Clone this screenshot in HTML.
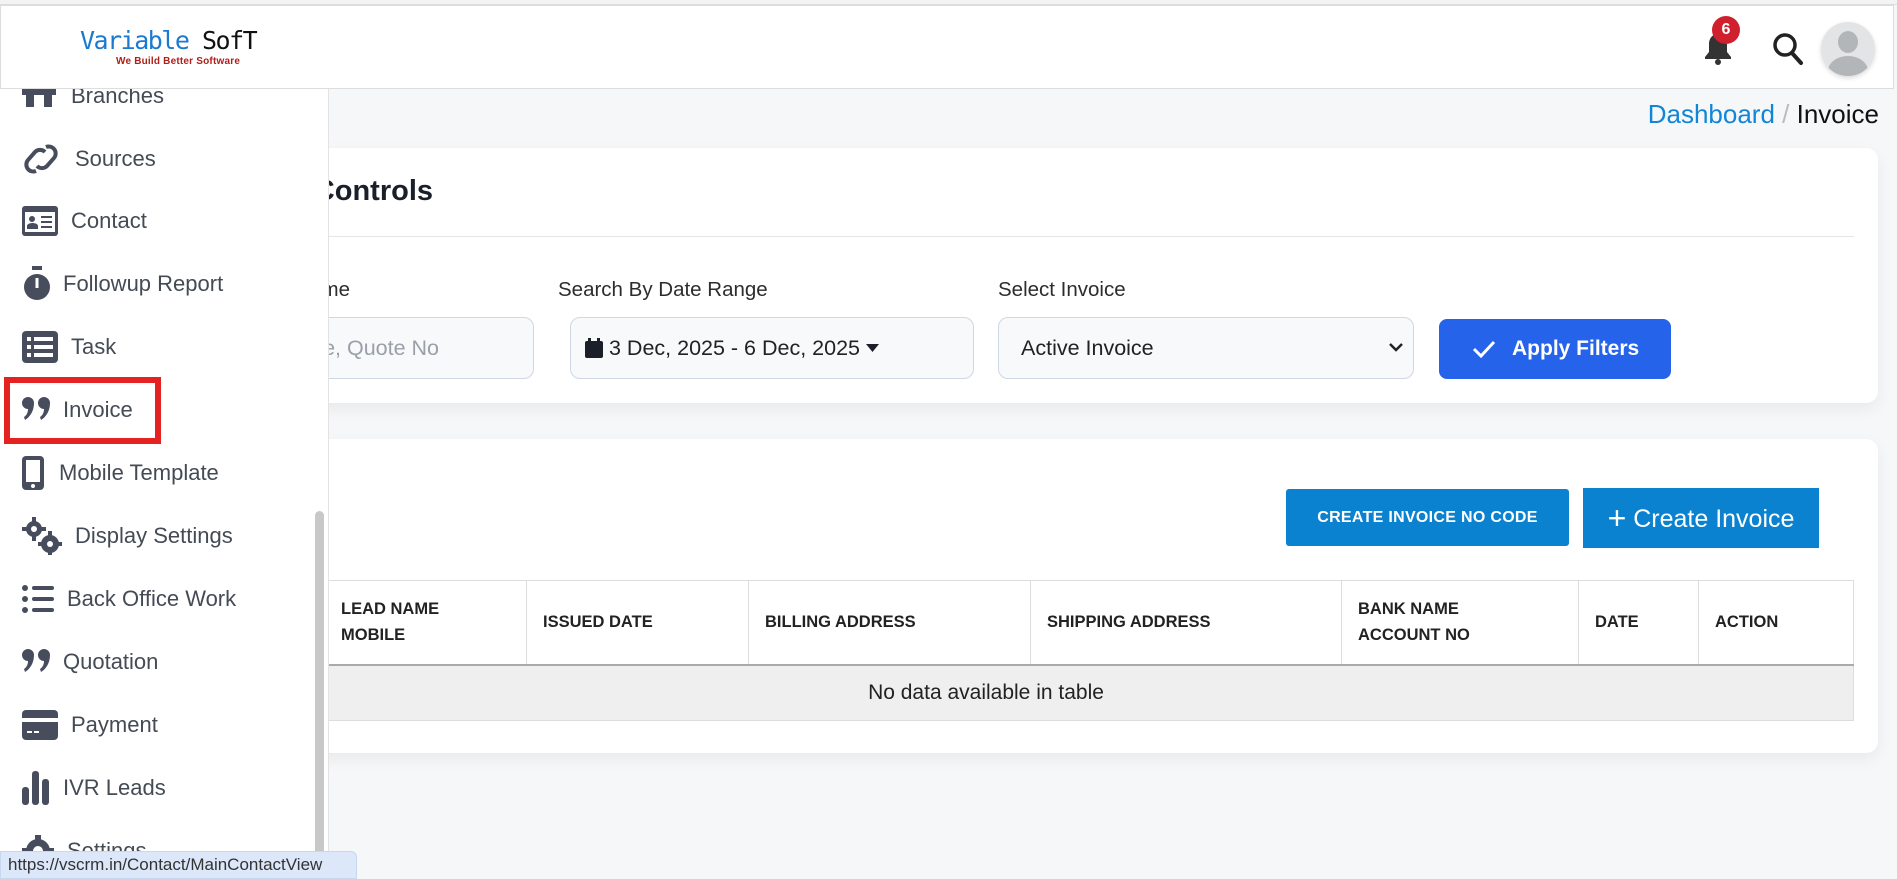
<!DOCTYPE html>
<html><head><meta charset="utf-8"><style>
*{box-sizing:border-box;margin:0;padding:0}
body{width:1897px;height:879px;overflow:hidden;background:#f6f7f9;font-family:"Liberation Sans",sans-serif;color:#222;position:relative}
.abs{position:absolute}
.header{left:0;top:5px;width:1894px;height:84px;background:#fff;border:1px solid #ddd;z-index:5}
.topline{left:0;top:0;width:1897px;height:5px;background:#f3f3f3;border-bottom:1px solid #ddd;z-index:6}
.sidebar{left:0;top:88px;width:329px;height:791px;background:#fff;border-right:1px solid #e3e3e3;z-index:4;overflow:hidden}
.item{position:absolute;left:0;height:40px;display:flex;align-items:center;font-size:22px;color:#444b55}
.item svg{position:absolute;left:22px;fill:#474d5c}
.card{background:#fff;border-radius:12px;box-shadow:0 6px 16px rgba(0,0,0,.06)}
.lbl{font-size:20.5px;color:#2d2d2d}
.inp{border:1px solid #cfd6e4;border-radius:10px;background:#f8f9fb;font-size:21.5px;color:#222;display:flex;align-items:center}
th{font-size:16.5px;font-weight:bold;color:#222;text-align:left;padding:0 16px;border-right:1px solid #ddd;line-height:26px}
table{border-collapse:collapse}
</style></head><body>
<div class="abs topline"></div>
<div class="abs header">
 <div class="abs" style="left:79px;top:20px;font-family:'DejaVu Sans Mono',monospace;font-size:25px;letter-spacing:-1.5px;line-height:30px"><span style="color:#1a7ad0">Variable</span> <span style="color:#111">SofT</span></div>
 <div class="abs" style="left:115px;top:50px;font-size:10px;color:#b0201a;font-weight:bold;letter-spacing:.2px">We Build Better Software</div>
 <svg class="abs" style="left:1700px;top:24px" width="34" height="38" viewBox="0 0 34 38"><path d="M17 4c-6 0-9 5-9 10v8l-4 5v2h26v-2l-4-5v-8c0-5-3-10-9-10z" fill="#333"/><circle cx="17" cy="32" r="3" fill="#333"/></svg>
 <div class="abs" style="left:1711px;top:10px;width:28px;height:28px;border-radius:50%;background:#d0202e;color:#fff;font-size:16px;font-weight:bold;text-align:center;line-height:28px">6</div>
 <svg class="abs" style="left:1771px;top:26px" width="32" height="34" viewBox="0 0 32 34"><circle cx="13" cy="13" r="10" stroke="#222" stroke-width="3.5" fill="none"/><path d="M20 21l9 10" stroke="#222" stroke-width="4" stroke-linecap="round"/></svg>
 <div class="abs" style="left:1820px;top:16px;width:54px;height:54px;border-radius:50%;background:#e2e4e6;overflow:hidden;box-shadow:0 2px 5px rgba(0,0,0,.15)"><div class="abs" style="left:17px;top:9px;width:20px;height:22px;border-radius:50%;background:#b3b6b9"></div><div class="abs" style="left:7px;top:34px;width:40px;height:30px;border-radius:50%;background:#b3b6b9"></div></div>
</div>

<div class="abs sidebar">
 <div class="item" style="top:-12px"><svg width="34" height="30" viewBox="0 0 34 30"><path d="M0 4h34v10H0zM4 14h8v12H4zM22 14h8v12h-8z"/></svg><span style="margin-left:71px">Branches</span></div>
 <div class="item" style="top:51px"><svg width="38" height="36" viewBox="0 0 38 36"><path d="M14 30a7 7 0 0 1-8-11l7-8a7 7 0 0 1 10 0M24 6a7 7 0 0 1 8 11l-7 8a7 7 0 0 1-10 0" stroke="#474d5c" stroke-width="4" fill="none"/></svg><span style="margin-left:75px">Sources</span></div>
 <div class="item" style="top:113px"><svg width="36" height="30" viewBox="0 0 36 30"><rect x="0" y="0" width="36" height="30" rx="3"/><rect x="3" y="6" width="30" height="20" fill="#fff"/><circle cx="10" cy="13" r="3"/><path d="M5 23h11v-3c0-2-3-3-5.5-3S5 18 5 20z M19 10h11v2H19zM19 15h11v2H19zM19 20h11v2H19z"/></svg><span style="margin-left:71px">Contact</span></div>
 <div class="item" style="top:176px"><svg width="30" height="36" viewBox="0 0 30 36"><rect x="10" y="0" width="10" height="4"/><circle cx="15" cy="21" r="13"/><rect x="13.5" y="12" width="3" height="10" fill="#fff"/></svg><span style="margin-left:63px">Followup Report</span></div>
 <div class="item" style="top:239px"><svg width="36" height="32" viewBox="0 0 36 32"><rect width="36" height="32" rx="4"/><rect x="5" y="6" width="4" height="4" fill="#fff"/><rect x="12" y="6" width="19" height="4" fill="#fff"/><rect x="5" y="14" width="4" height="4" fill="#fff"/><rect x="12" y="14" width="19" height="4" fill="#fff"/><rect x="5" y="22" width="4" height="4" fill="#fff"/><rect x="12" y="22" width="19" height="4" fill="#fff"/></svg><span style="margin-left:71px">Task</span></div>
 <div class="item" style="top:302px"><svg width="28" height="26" viewBox="0 0 28 26"><path d="M6 0a6 6 0 0 1 6 6c0 8-4 14-9 17l-1-3c3-2 4-5 4-8A6 6 0 0 1 6 0zM22 0a6 6 0 0 1 6 6c0 8-4 14-9 17l-1-3c3-2 4-5 4-8a6 6 0 0 1 0-12z"/></svg><span style="margin-left:63px">Invoice</span></div>
 <div class="item" style="top:365px"><svg width="22" height="34" viewBox="0 0 22 34"><rect width="22" height="34" rx="4"/><rect x="4" y="4" width="14" height="22" fill="#fff"/><circle cx="11" cy="30" r="2" fill="#fff"/></svg><span style="margin-left:59px">Mobile Template</span></div>
 <div class="item" style="top:428px"><svg width="40" height="38" viewBox="0 0 40 38"><circle cx="12" cy="12" r="8"/><circle cx="12" cy="12" r="3" fill="#fff"/><circle cx="28" cy="27" r="9"/><circle cx="28" cy="27" r="3" fill="#fff"/><path d="M10 0h4v5h-4zM10 19h4v5h-4zM0 10h5v4H0zM19 10h5v4h-5zM26 14h4v5h-4zM26 35h4v3h-4zM16 25h5v4h-5zM35 25h5v4h-5z"/></svg><span style="margin-left:75px">Display Settings</span></div>
 <div class="item" style="top:491px"><svg width="32" height="30" viewBox="0 0 32 30"><circle cx="3" cy="4" r="3"/><circle cx="3" cy="15" r="3"/><circle cx="3" cy="26" r="3"/><rect x="10" y="2" width="22" height="4" rx="2"/><rect x="10" y="13" width="22" height="4" rx="2"/><rect x="10" y="24" width="22" height="4" rx="2"/></svg><span style="margin-left:67px">Back Office Work</span></div>
 <div class="item" style="top:554px"><svg width="28" height="26" viewBox="0 0 28 26"><path d="M6 0a6 6 0 0 1 6 6c0 8-4 14-9 17l-1-3c3-2 4-5 4-8A6 6 0 0 1 6 0zM22 0a6 6 0 0 1 6 6c0 8-4 14-9 17l-1-3c3-2 4-5 4-8a6 6 0 0 1 0-12z"/></svg><span style="margin-left:63px">Quotation</span></div>
 <div class="item" style="top:617px"><svg width="36" height="30" viewBox="0 0 36 30"><rect width="36" height="30" rx="4"/><rect x="0" y="8" width="36" height="4" fill="#fff"/><rect x="5" y="21" width="5" height="2" fill="#fff"/><rect x="12" y="21" width="5" height="2" fill="#fff"/></svg><span style="margin-left:71px">Payment</span></div>
 <div class="item" style="top:680px"><svg width="28" height="34" viewBox="0 0 28 34"><rect x="0" y="16" width="7" height="18" rx="3"/><rect x="10" y="0" width="7" height="34" rx="3"/><rect x="20" y="8" width="7" height="26" rx="3"/></svg><span style="margin-left:63px">IVR Leads</span></div>
 <div class="item" style="top:743px"><svg width="32" height="32" viewBox="0 0 32 32"><circle cx="16" cy="16" r="12"/><circle cx="16" cy="16" r="5" fill="#fff"/><path d="M13 0h6v6h-6zM13 26h6v6h-6zM0 13h6v6H0zM26 13h6v6h-6z"/></svg><span style="margin-left:67px">Settings</span></div>
 <div class="abs" style="left:315px;top:423px;width:9px;height:380px;border-radius:5px;background:#c8c8c8"></div>
</div>
<div class="abs" style="left:4px;top:377px;width:157px;height:67px;border:6px solid #e52222;z-index:7"></div>

<div class="abs" style="right:18px;top:99px;font-size:26px;z-index:1"><span style="color:#1185d6">Dashboard</span> <span style="color:#bbb">/</span> <span style="color:#111">Invoice</span></div>

<div class="abs card" style="left:200px;top:148px;width:1678px;height:255px">
 <div class="abs" style="right:1445px;top:27px;font-size:29px;font-weight:bold;color:#1b1f2a;white-space:nowrap">Filter Controls</div>
 <div class="abs" style="left:0;top:88px;width:1654px;height:1px;background:#e4e6ea"></div>
 <div class="abs lbl" style="right:1528px;top:130px;white-space:nowrap">Search By Name</div>
 <div class="abs inp" style="left:0;top:169px;width:334px;height:62px;justify-content:flex-end;padding-right:94px;color:#9aa0aa">Name, Quote No</div>
 <div class="abs lbl" style="left:358px;top:130px">Search By Date Range</div>
 <div class="abs inp" style="left:370px;top:169px;width:404px;height:62px;padding-left:14px"><svg width="18" height="20" viewBox="0 0 18 20"><rect x="0" y="3" width="18" height="17" rx="2" fill="#1b1f2a"/><rect x="3" y="0" width="3" height="5" fill="#1b1f2a"/><rect x="12" y="0" width="3" height="5" fill="#1b1f2a"/></svg><span style="margin-left:6px">3 Dec, 2025 - 6 Dec, 2025</span><svg style="margin-left:6px" width="13" height="9" viewBox="0 0 13 9"><path d="M0 0h13L6.5 8z" fill="#1b1f2a"/></svg></div>
 <div class="abs lbl" style="left:798px;top:130px">Select Invoice</div>
 <div class="abs inp" style="left:798px;top:169px;width:416px;height:62px;padding-left:22px">Active Invoice<svg class="abs" style="right:10px;top:24px" width="14" height="10" viewBox="0 0 14 10"><path d="M1 2l6 6 6-6" stroke="#222" stroke-width="2.5" fill="none"/></svg></div>
 <div class="abs" style="left:1239px;top:171px;width:232px;height:60px;background:#2563eb;border-radius:8px;color:#fff;font-size:21px;font-weight:bold;display:flex;align-items:center;padding-left:33px"><svg width="24" height="18" viewBox="0 0 24 18"><path d="M2 9l7 7L22 2" stroke="#fff" stroke-width="3" fill="none"/></svg><span style="margin-left:16px">Apply Filters</span></div>
</div>

<div class="abs card" style="left:200px;top:439px;width:1678px;height:314px">
 <div class="abs" style="left:1086px;top:50px;width:283px;height:57px;background:#0b82d0;border-radius:3px;color:#fff;font-size:16px;font-weight:bold;text-align:center;line-height:57px;letter-spacing:.3px">CREATE INVOICE NO CODE</div>
 <div class="abs" style="left:1383px;top:49px;width:236px;height:60px;background:#0b82d0;color:#fff;font-size:25px;text-align:center;line-height:60px"><span style="font-size:32px;vertical-align:-2px">+</span> Create Invoice</div>
 <table class="abs" style="left:0;top:141px;width:1654px;border:1px solid #ddd">
  <tr style="height:84px;border-bottom:2px solid #aaa">
   <th style="width:326px;padding-left:140px">LEAD NAME<br>MOBILE</th><th style="width:222px">ISSUED DATE</th><th style="width:282px">BILLING ADDRESS</th><th style="width:311px">SHIPPING ADDRESS</th><th style="width:237px">BANK NAME<br>ACCOUNT NO</th><th style="width:120px">DATE</th><th style="border-right:none">ACTION</th>
  </tr>
  <tr style="height:56px;background:#efefef"><td colspan="7" style="text-align:center;font-size:21px;color:#222;padding-right:82px">No data available in table</td></tr>
 </table>
</div>

<div class="abs" style="left:0;top:851px;width:357px;height:28px;background:#dce7f9;border:1px solid #c8d6ee;border-radius:0 6px 0 0;font-size:17px;color:#333;line-height:26px;padding-left:7px;z-index:8">https://vscrm.in/Contact/MainContactView</div>
</body></html>
